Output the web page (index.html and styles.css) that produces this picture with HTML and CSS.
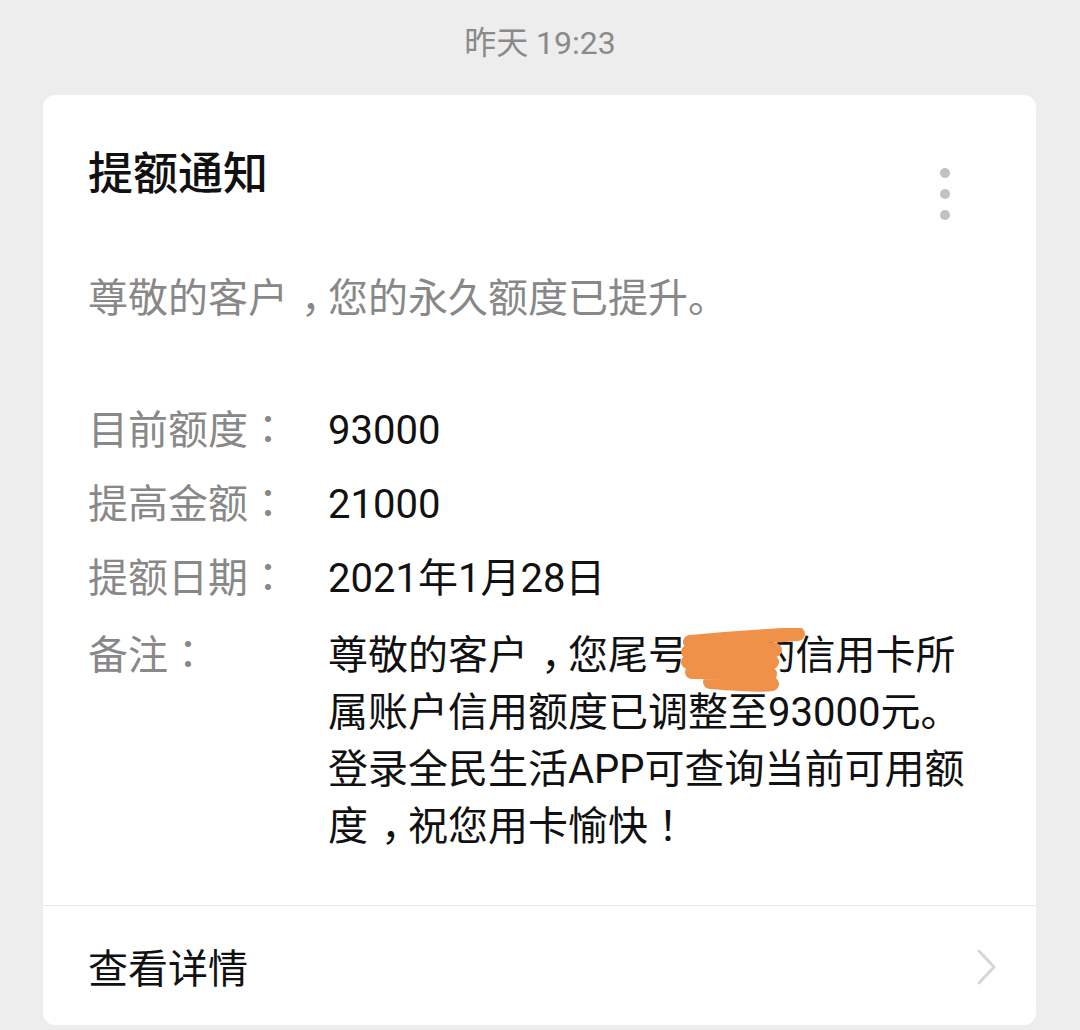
FILE: index.html
```html
<!DOCTYPE html>
<html lang="zh-CN">
<head>
<meta charset="utf-8">
<link rel="stylesheet" href="styles.css">
</head>
<body>
<div class="time">昨天 19:23</div>
<div class="card">
  <div class="body">
    <div class="header">
      <div class="title">提额通知</div>
      <div class="dots"><span></span><span></span><span></span></div>
    </div>
    <div class="intro">尊敬的客户<span class="c">，</span>您的永久额度已提升。</div>
    <div class="rows">
      <div class="label">目前额度<span class="p" lang="zh-TW">：</span></div><div class="value">93000</div>
      <div class="label">提高金额<span class="p" lang="zh-TW">：</span></div><div class="value">21000</div>
      <div class="label">提额日期<span class="p" lang="zh-TW">：</span></div><div class="value">2021年1月28日</div>
      <div class="label late">备注<span class="p" lang="zh-TW">：</span></div>
      <div class="value remark late">尊敬的客户<span class="c">，</span>您尾号<span class="masked">123<svg class="scribble" viewBox="0 0 130 70" width="130" height="70"><path d="M10 14 C50 10, 90 8, 118 6 M8 24 C40 20, 70 20, 95 22 M8 34 C40 32, 70 32, 92 34 M12 44 C40 44, 70 44, 90 46 M30 54 C55 56, 80 58, 92 56" fill="none" stroke="#f0914a" stroke-width="14" stroke-linecap="round"/></svg></span>的信用卡所属账户信用额度已调整至93000元。登录全民生活APP可查询当前可用额度<span class="c">，</span>祝您用卡愉快<span class="p" lang="zh-TW">！</span></div>
    </div>
  </div>
  <div class="footer">
    <div class="link">查看详情</div>
    <svg class="chev" width="22" height="38" viewBox="0 0 22 38"><polyline points="3,3 18,19 3,35" fill="none" stroke="#d6d6d6" stroke-width="3" stroke-linecap="round" stroke-linejoin="round"/></svg>
  </div>
</div>
</body>
</html>
```

FILE: styles.css
```css
html, body {
  margin: 0;
  padding: 0;
  background: #ededed;
  font-family: "Roboto", "Noto Sans CJK SC", sans-serif;
}
.p {
  font-family: "Noto Sans CJK TC", sans-serif;
  line-height: 0;
}
.c {
  display: inline-block;
  padding-left: 13px;
  margin-right: -13px;
}
.time {
  height: 95px;
  line-height: 86px;
  text-align: center;
  color: #8a8a8a;
  font-size: 32px;
}
.card {
  margin: 0 44px 0 43px;
  height: 930px;
  background: #fff;
  border-radius: 12px;
  display: flex;
  flex-direction: column;
}
.body {
  padding: 50px 45px 0 45px;
  flex: 1;
}
.header {
  display: flex;
  justify-content: space-between;
  align-items: flex-start;
}
.title {
  font-size: 45px;
  line-height: 60px;
  color: #111;
  font-weight: 500;
}
.dots {
  display: flex;
  flex-direction: column;
  gap: 11px;
  margin-top: 23px;
  margin-right: 41px;
}
.dots span {
  width: 10px;
  height: 10px;
  border-radius: 50%;
  background: #c2c2c2;
}
.intro {
  margin-top: 51px;
  font-size: 40px;
  line-height: 56px;
  color: #888;
}
.rows {
  margin-top: 75px;
  display: grid;
  grid-template-columns: 240px 1fr;
  row-gap: 17px;
  font-size: 40px;
  line-height: 57px;
}
.label {
  color: #888;
}
.value {
  color: #111;
}
.late {
  margin-top: 3px;
}
.remark {
  padding-right: 10px;
}
.masked {
  position: relative;
}
.scribble {
  position: absolute;
  left: -8px;
  top: -4px;
}
.footer {
  height: 119px;
  border-top: 1.5px solid #e6e6e6;
  display: flex;
  align-items: center;
  justify-content: space-between;
  padding: 0 38px 0 45px;
}
.link {
  font-size: 40px;
  color: #111;
}
.chev {
  display: block;
  margin-top: 2px;
}
```
